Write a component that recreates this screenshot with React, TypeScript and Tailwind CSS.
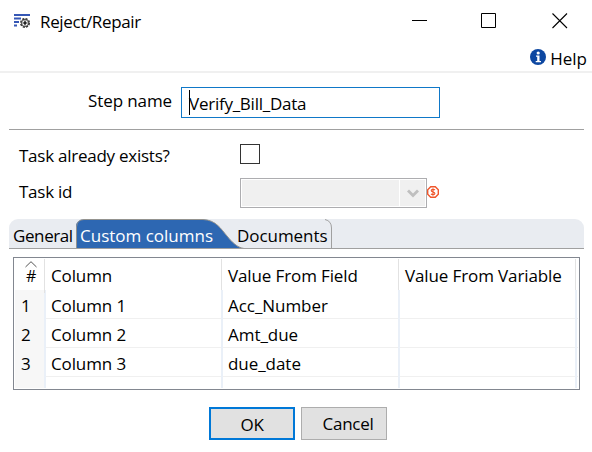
import React from 'react';

const COLUMNS = ['Column', 'Value From Field', 'Value From Variable'];

const ROWS = [
  { id: 1, column: 'Column 1', field: 'Acc_Number' },
  { id: 2, column: 'Column 2', field: 'Amt_due' },
  { id: 3, column: 'Column 3', field: 'due_date' },
];

function StepIcon() {
  return (
    <svg width="17" height="15" viewBox="0 0 17 15" aria-hidden="true">
      <path d="M0 1h16M0 4.5h7M0 8h5M0 11.5h3" stroke="#3557b5" strokeWidth="2" />
      <circle cx="11" cy="9" r="4.2" fill="#fff" stroke="#333" strokeWidth="1.6" strokeDasharray="2.1 1.2" />
      <circle cx="11" cy="9" r="3.5" fill="none" stroke="#444" strokeWidth="1" />
      <path d="M11 6.5v5M8.500 9h5" stroke="#333" strokeWidth="1.2" />
      <circle cx="11" cy="9" r="1.4" fill="#222" />
    </svg>
  );
}

function TitleBar() {
  return (
    <div className="flex h-[42px] items-center">
      <div className="ml-3.5">
        <StepIcon />
      </div>
      <h1 className="ml-[9px] mt-px flex-1 text-[17px] tracking-[-0.35px]">Reject/Repair</h1>
      <svg width="156" height="16" viewBox="0 0 156 16" fill="none" stroke="#000" className="mr-6">
        <path d="M0 7.5h15M69.5.5h14v14h-14z" />
        <path d="M140.500 .5l14.500 14.500M155 .5L140.500 15" strokeWidth="1.1" />
      </svg>
    </div>
  );
}

function HelpLink() {
  return (
    <div className="flex h-[31px] items-start justify-end border-b-2 border-[#f0f0f0] pr-[5px]">
      <svg width="16" height="16" viewBox="0 0 16 16" className="mt-[7px]">
        <circle cx="8" cy="8" r="8" fill="#0d47a1" />
        <circle cx="8.200" cy="4" r="1.600" fill="#fff" />
        <path d="M6 6.500h3.500v5.500H11v1.300H5.700V12h1.500V7.800H6z" fill="#fff" />
      </svg>
      <span className="ml-1 mt-1 text-[17px] leading-[26px]">Help</span>
    </div>
  );
}

function TabBar() {
  return (
    <div className="relative ml-[9px] mr-2 mt-[11px] flex h-[30px] overflow-hidden rounded-t-[9px] border-b border-[#a0a0a0] bg-[#e9ecf1] text-[17px] leading-[33px]">
      <svg width="330" height="30" viewBox="0 0 330 30" className="absolute left-0 top-0">
        <path
          d="M67 30V8Q67 .5 75 .5H194C207 1 212 10 218 17C223 23 228 28.500 235 29.500V30z"
          fill="#2d67b2"
        />
        <path
          d="M67.500 30V8Q68 .5 75 .5H194C207 1 212 10 218 17C223 23 228 28.500 235 29.500"
          fill="none"
          stroke="#94938f"
        />
        <path d="M316 .5Q322.500 2 322.500 9V30" fill="none" stroke="#a0a0a0" />
      </svg>
      <span className="relative w-[71px] whitespace-nowrap pl-1 tracking-[-0.4px]">General</span>
      <span className="relative w-[157px] whitespace-nowrap text-white">Custom columns</span>
      <span className="relative whitespace-nowrap tracking-[-0.05px]">Documents</span>
    </div>
  );
}

function ColumnsTable() {
  return (
    <div className="ml-[13px] mt-2 h-[133px] w-[567px] border border-[#828790] p-px text-[17px]">
      <div className="grid h-[31px] grid-cols-[31px_177px_177px_177px] leading-[34px]">
        <span className="relative mr-px border-r border-[#e2e2e2] pl-[11px] text-[16px]">
          <svg width="12" height="7" viewBox="0 0 12 7" fill="none" stroke="#555" className="absolute left-2.5 top-[2px]">
            <path d="M.5 6L6 .7L11.500 6" />
          </svg>
          #
        </span>
        {COLUMNS.map((name) => (
          <span key={name} className="mr-px whitespace-nowrap border-r border-[#e2e2e2] pl-[5px] tracking-[-0.12px]">
            {name}
          </span>
        ))}
      </div>
      {ROWS.map((row) => (
        <div key={row.id} className="grid h-[29px] grid-cols-[31px_177px_177px_177px] border-b border-[#f0f0f0] leading-[31px]">
          <span className="border-r-2 border-[#eaf0f8] bg-[#f7f7f7] pl-1.5">{row.id}</span>
          <span className="border-r-2 border-[#eaf0f8] pl-[5px] tracking-[-0.12px]">{row.column}</span>
          <span className="border-r-2 border-[#eaf0f8] pl-[5px] tracking-[-0.05px]">{row.field}</span>
          <span className="border-r-2 border-[#eaf0f8]" />
        </div>
      ))}
      <div className="grid h-[11px] grid-cols-[31px_177px_177px_177px]">
        <span className="border-r-2 border-[#eaf0f8] bg-[#f7f7f7]" />
        <span className="border-r-2 border-[#eaf0f8]" />
        <span className="border-r-2 border-[#eaf0f8]" />
        <span className="border-r-2 border-[#eaf0f8]" />
      </div>
    </div>
  );
}

export default function App() {
  return (
    <div className="h-[452px] w-[592px] overflow-hidden bg-white font-['Open_Sans',sans-serif] text-black">
      <TitleBar />
      <HelpLink />
      <div className="mt-3.5 flex h-[31px]">
        <label className="w-[181px] pl-[88px] text-[17px] leading-[28px] tracking-[-0.1px]">Step name</label>
        <div className="flex w-[259px] border border-[#0f78c8] pl-[7px] text-[17px] leading-[32px] tracking-[-0.25px]">
          <span className="-mr-px mt-0.5 h-[25px] w-px bg-black" />
          Verify_Bill_Data
        </div>
      </div>
      <hr className="ml-[9px] mr-2 mt-[11px] border-[#a0a0a0]" />
      <div className="mt-3.5 flex h-5">
        <label className="w-[240px] pl-[19px] text-[17px] leading-[24px] tracking-[-0.25px]">Task already exists?</label>
        <div className="size-5 border border-[#333]" />
      </div>
      <div className="mt-3.5 flex h-[30px]">
        <label className="w-[240px] pl-[19px] text-[17px] leading-[28px] tracking-[-0.25px]">Task id</label>
        <div className="flex w-[187px] border border-[#adadb0] bg-white p-px">
          <div className="flex-1 bg-[#f0f0f0]" />
          <div className="ml-px flex w-[25px] items-center justify-center bg-[#f0f0f0]">
            <svg width="12" height="9" viewBox="0 0 12 9" fill="none" stroke="#bfbfbf" strokeWidth="2.800">
              <path d="M1 1.500L6 6.500L11 1.500" />
            </svg>
          </div>
        </div>
        <svg width="12" height="12" viewBox="0 0 12 12" fill="none" stroke="#f0562b" className="mt-2">
          <path d="M3.700 .7h4.600l3 3v4.600l-3 3H3.700l-3-3V3.700z" strokeWidth="1.400" />
          <path d="M8 4Q7.500 3.400 6 3.400Q4.200 3.400 4.200 4.600Q4.200 5.600 6 6Q7.900 6.400 7.900 7.500Q7.900 8.600 6 8.600Q4.500 8.600 4 7.900M6 2.200v7.600" strokeWidth="1.100" />
        </svg>
      </div>
      <TabBar />
      <ColumnsTable />
      <div className="ml-[209px] mt-[17px] flex h-[33px] gap-1.5 text-[17px] leading-[31px] tracking-[-0.3px]">
        <button className="w-[86px] border-2 border-[#0078d7] bg-[#e1e1e1]">OK</button>
        <button className="w-[86px] border border-[#adadad] bg-[#e1e1e1] pl-2">Cancel</button>
      </div>
    </div>
  );
}
